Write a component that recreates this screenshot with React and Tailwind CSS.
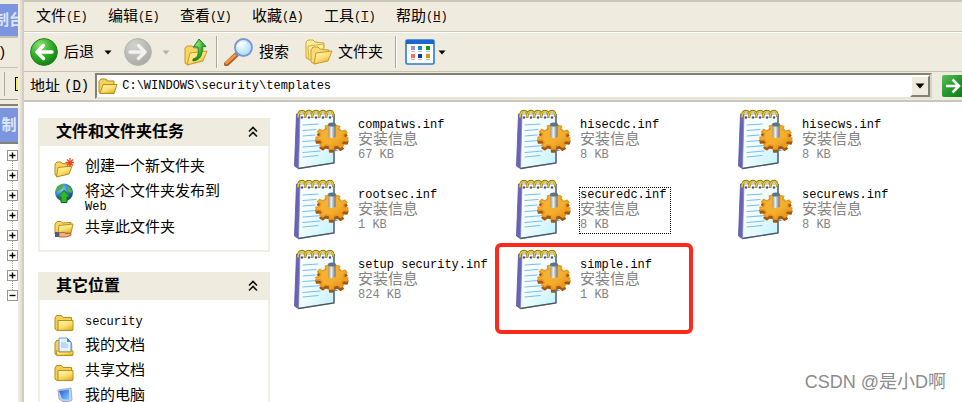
import React from "react";

const latin = "font-['Liberation_Mono','Noto_Sans_CJK_SC',monospace]";

const menus = [
  ["文件", "F"],
  ["编辑", "E"],
  ["查看", "V"],
  ["收藏", "A"],
  ["工具", "T"],
  ["帮助", "H"],
];

const files = [
  { name: "compatws.inf", size: "67 KB" },
  { name: "hisecdc.inf", size: "8 KB" },
  { name: "hisecws.inf", size: "8 KB" },
  { name: "rootsec.inf", size: "1 KB" },
  { name: "securedc.inf", size: "8 KB", focused: true },
  { name: "securews.inf", size: "8 KB" },
  { name: "setup security.inf", size: "824 KB" },
  { name: "simple.inf", size: "1 KB", marked: true },
];

// Outline of a nine-toothed cog seen at an angle, centred on 0,0.
const cogPath = (() => {
  const teeth = 9;
  const points = [];
  for (let i = 0; i < teeth; i++) {
    const middle = ((i + 0.3) / teeth) * Math.PI * 2;
    [
      [-0.24, 0.76],
      [-0.17, 1],
      [0.17, 1],
      [0.24, 0.76],
    ].forEach(([turn, reach]) => {
      const a = middle + (turn / teeth) * Math.PI * 2;
      points.push(`${(Math.cos(a) * 16 * reach).toFixed(1)} ${(Math.sin(a) * 12 * reach).toFixed(1)}`);
    });
  }
  return `M${points.join("L")}z`;
})();

function Gradients() {
  return (
    <svg width="0" height="0" className="absolute" aria-hidden="true">
      <defs>
        <radialGradient id="green" cx="35%" cy="25%" r="80%">
          <stop offset="0" stopColor="#8fe07a" />
          <stop offset="0.5" stopColor="#38b22b" />
          <stop offset="1" stopColor="#0b7d10" />
        </radialGradient>
        <radialGradient id="grey" cx="35%" cy="25%" r="80%">
          <stop offset="0" stopColor="#d2d2ce" />
          <stop offset="1" stopColor="#a9a9a5" />
        </radialGradient>
        <linearGradient id="go" x1="0" y1="0" x2="1" y2="1">
          <stop offset="0" stopColor="#5cbf5c" />
          <stop offset="0.5" stopColor="#239a2b" />
          <stop offset="1" stopColor="#0c7a16" />
        </linearGradient>
        <linearGradient id="folder" x1="0" y1="0" x2="0.6" y2="1">
          <stop offset="0" stopColor="#fff6b4" />
          <stop offset="0.6" stopColor="#fbdf72" />
          <stop offset="1" stopColor="#e6b32f" />
        </linearGradient>
        <linearGradient id="page" x1="0" y1="0" x2="1" y2="1">
          <stop offset="0" stopColor="#ffffff" />
          <stop offset="0.5" stopColor="#eefcff" />
          <stop offset="1" stopColor="#bdf2fb" />
        </linearGradient>
        <linearGradient id="gear" x1="0" y1="0" x2="1" y2="1">
          <stop offset="0" stopColor="#f9b537" />
          <stop offset="0.6" stopColor="#f4ad2c" />
          <stop offset="1" stopColor="#e08a10" />
        </linearGradient>
        <linearGradient id="pin" x1="0" y1="0" x2="1" y2="0">
          <stop offset="0" stopColor="#8a969e" />
          <stop offset="0.4" stopColor="#eef2f4" />
          <stop offset="1" stopColor="#66727a" />
        </linearGradient>
        <radialGradient id="lens" cx="40%" cy="35%" r="70%">
          <stop offset="0" stopColor="#f4fdff" />
          <stop offset="1" stopColor="#9fdcf5" />
        </radialGradient>
        <radialGradient id="globe" cx="35%" cy="30%" r="75%">
          <stop offset="0" stopColor="#8ecbff" />
          <stop offset="0.6" stopColor="#2a78d0" />
          <stop offset="1" stopColor="#0e3f96" />
        </radialGradient>
        <linearGradient id="screen" x1="0" y1="0" x2="1" y2="1">
          <stop offset="0" stopColor="#2354d8" />
          <stop offset="1" stopColor="#7cd0ff" />
        </linearGradient>
      </defs>
    </svg>
  );
}

function CircleArrow({ back }) {
  return (
    <svg width="28" height="28" viewBox="0 0 28 28" className="shrink-0">
      <circle cx="14" cy="14" r="13.4" fill={back ? "url(#green)" : "url(#grey)"} stroke={back ? "#23852a" : "#b4b4b0"} />
      <g transform={back ? undefined : "translate(28 0) scale(-1 1)"}>
        <path d="M22 14H8M13.5 7.5 7 14l6.5 6.5" fill="none" stroke={back ? "#fff" : "#f3f2ee"} strokeWidth="3.4" strokeLinecap="round" strokeLinejoin="round" />
      </g>
    </svg>
  );
}

function Caret({ color = "#000" }) {
  return (
    <svg width="8" height="5" viewBox="0 0 8 5" className="shrink-0">
      <path d="M.5.5h7L4 4.5z" fill={color} />
    </svg>
  );
}

function UpFolderIcon() {
  return (
    <svg width="24" height="28" viewBox="0 0 24 28" className="shrink-0">
      <path d="M1 10l2-2h5l2 2 9 0v6L4 27l-3-2z" fill="#f6d566" stroke="#c79a24" />
      <path d="M6 15l17-2-4 10-16 4z" fill="url(#folder)" stroke="#c79a24" />
      <path d="M9 21c5-1 6-5 5-12h-4.500L15 1l7 7.500-4 .5c1 8-2 13-9 14z" fill="url(#green)" stroke="#1d8028" />
    </svg>
  );
}

function SearchIcon() {
  return (
    <svg width="30" height="28" viewBox="0 0 30 28" className="shrink-0">
      <path d="M12 17 2.500 26" stroke="#a8592a" strokeWidth="5" strokeLinecap="round" />
      <path d="M12 16.500 2.500 25" stroke="#f0953d" strokeWidth="3" strokeLinecap="round" />
      <path d="M14 15l-2 2" stroke="#6f7fc0" strokeWidth="4" />
      <circle cx="19.500" cy="9.500" r="8.500" fill="url(#lens)" stroke="#7d94dc" strokeWidth="1.800" />
      <path d="M14 8c1-3 4-4 7-3" fill="none" stroke="#fff" strokeWidth="2" strokeLinecap="round" />
    </svg>
  );
}

function FoldersIcon() {
  return (
    <svg width="28" height="26" viewBox="0 0 28 26" className="shrink-0">
      <path d="M1 3l2-2h5l2 2 9 1v5L5 21l-4-2z" fill="url(#folder)" stroke="#d0a537" />
      <path d="M3 7l16-2-2 11-13 5z" fill="#fff0a0" stroke="#d8b04a" />
      <path d="M6 11l2-3h5l2 2 9 1v4l-14 10-4-2z" fill="#f8db76" stroke="#c79a2e" />
      <path d="M11 14l16-2-4 10-14 3z" fill="url(#folder)" stroke="#c79a2e" />
    </svg>
  );
}

function ViewsIcon() {
  const dots = [
    [6, 7, "#9c96c8"],
    [13, 7, "#1389d8"],
    [21, 7, "#119912"],
    [6, 15, "#f4764e"],
    [13, 15, "#1239a8"],
    [21, 15, "#cf9b0f"],
  ];
  return (
    <svg width="30" height="26" viewBox="0 0 30 26" className="shrink-0">
      <rect x="1" y="1" width="28" height="24" rx="1.500" fill="#fbfdff" stroke="#2a78d4" strokeWidth="1.600" />
      <path d="M1 1h28v4H1z" fill="#1c66cf" />
      {dots.map(([x, y, c]) => (
        <g key={c}>
          <rect x={x} y={y} width="4" height="4" fill={c} />
          <path d={`M${x} ${y + 5.5}h4`} stroke="#b6bccb" />
        </g>
      ))}
    </svg>
  );
}

function OpenFolder() {
  return (
    <svg width="20" height="17" viewBox="0 0 20 17" className="shrink-0">
      <path d="M1 3.500 3 1h5l1.500 2H16v3L4 15.500H2L1 14z" fill="#f5d259" stroke="#b58a14" />
      <path d="M5 6.500h14L16 15.500H2z" fill="url(#folder)" stroke="#b88c18" />
    </svg>
  );
}

function ClosedFolder({ doc }) {
  return (
    <svg width="20" height="20" viewBox="0 0 20 20" className="shrink-0">
      <path d="M1 6l1.500-2.500h5L9 5.500h8.500L18 17l-1 1.500H3L1 17z" fill="#f3cf55" stroke="#b88e1c" />
      {doc && (
        <>
          <path d="M5 1h8l4 4v10H5z" fill="#e4f2ff" stroke="#6b9bd8" />
          <path d="M13 1v4h4z" fill="#3f8ee6" />
          <path d="M7 6h5M7 8h7M7 10h7" stroke="#8fc0ee" />
        </>
      )}
      <path d={doc ? "M2 14h3v1h12v-1h2v4l-1 .5H3z" : "M4 8.500h15V18l-1 .5H4z"} fill="url(#folder)" stroke="#b88e1c" />
    </svg>
  );
}

function NewFolder() {
  return (
    <svg width="20" height="20" viewBox="0 0 20 20" className="shrink-0">
      <path d="M1 6l2-2h4l1 1.500 8 .5v4L4 18l-3-1z" fill="#f5d666" stroke="#b88e1c" />
      <path d="M4 9.500 18 8l-3 8-12.500 3z" fill="url(#folder)" stroke="#b88e1c" />
      <path d="M16 0v9M11.500 4.500h9M13 1.500l6 6M19 1.500l-6 6" stroke="#ee4a22" strokeWidth="1.300" />
    </svg>
  );
}

function PublishIcon() {
  return (
    <svg width="20" height="20" viewBox="0 0 20 20" className="shrink-0">
      <circle cx="10" cy="9.500" r="9" fill="url(#globe)" />
      <path d="M3 4c3-3 6-3 7-2L8 6 4 8 1.500 9zM13 3c4 1 5 4 5.500 7L14 9z" fill="#4fb043" />
      <path d="M10 7.500l6.500 6.500H13v5.500H7V14H3.500z" fill="#35b52c" stroke="#0f6d18" />
    </svg>
  );
}

function ShareIcon() {
  return (
    <svg width="20" height="18" viewBox="0 0 20 18" className="shrink-0">
      <path d="M1 4l2-2.500h4L8.500 3 17 2.500V9L5 14H1z" fill="#f5d666" stroke="#b88e1c" />
      <path d="M5 5.500 19 4l-2 9H4z" fill="url(#folder)" stroke="#b88e1c" />
      <path d="M1 12h4v5H1z" fill="#4a5b8c" />
      <path d="M5 13c3-1 5-1 7 .5h5v2l-5 1.500H5z" fill="#eeb184" stroke="#9a5328" strokeWidth=".8" />
    </svg>
  );
}

function ComputerIcon() {
  return (
    <svg width="20" height="20" viewBox="0 0 20 20" className="shrink-0">
      <path d="M4 3l13-2 1 12-5 4-5-3-3-2z" fill="#c9cbe8" stroke="#a9abd0" />
      <path d="M5 4l10-1.500V13L8 12z" fill="url(#screen)" />
      <path d="M8 15l6-.5 2 4-9 1z" fill="#d8d8e4" stroke="#9a9ab0" />
    </svg>
  );
}

function InfIcon() {
  return (
    <svg width="56" height="62" viewBox="0 0 56 62" className="shrink-0">
      <path d="M2.500 5 .5 57l4.500 3L7 6z" fill="#6a64b8" stroke="#5753a4" strokeWidth=".8" />
      <path d="M6 5h34v49L4.500 59.500z" fill="url(#page)" stroke="#8089a8" strokeWidth=".8" />
      <path d="M40 5v49L4.500 59.500" fill="none" stroke="#4e5664" strokeWidth="1.300" />
      <g fill="none" stroke="#7dbcec" strokeWidth="1.200" strokeLinecap="round">
        <path d="M9 16l15-1M9 21.500l13-1M9 27l12-1M9 32.500l14-1M9 38l19-1.500M9 43.500l17-1.500M9 48l15-1.500" />
      </g>
      {[4, 11, 18, 25, 32].map((x) => (
        <g key={x} fill="none">
          <circle cx={x + 4} cy="8.500" r="1.200" fill="#4c489b" />
          <path d={`M${x} 9c0-5 2-7 4-7s4 2 3 6`} stroke="#857011" strokeWidth="2.400" />
          <path d={`M${x} 8.500c0-4.500 2-6 4-6s3.500 1.500 3 5`} stroke="#e6cb35" strokeWidth="1.400" />
        </g>
      ))}
      <path d="M33 39l6 4 6-2z" fill="#3c9cf0" />
      <g transform="translate(38 28)" strokeLinejoin="round">
        <path d={cogPath} transform="translate(0 3)" fill="#a9560a" stroke="#a9560a" strokeWidth="1.500" />
        <path d={cogPath} fill="url(#gear)" stroke="#e59c22" strokeWidth="1.500" />
        <path d="M-3.500-12V0c2 1.500 5 1.500 7 0v-12z" fill="url(#pin)" />
        <ellipse cx="0" cy="-12.500" rx="4" ry="2" fill="#5f7482" />
      </g>
    </svg>
  );
}

function Chevrons() {
  return (
    <svg width="10" height="12" viewBox="0 0 10 12">
      <path d="M1 5.500 5 1.500l4 4M1 10.500l4-4 4 4" fill="none" stroke="#111" strokeWidth="1.600" />
    </svg>
  );
}

function Panel({ title, children, className }) {
  return (
    <section className={className}>
      <h2 className="flex h-7 items-center justify-between bg-[#efebde] pr-3 pl-[18px] text-[16px] font-bold">
        {title}
        <button aria-label={`折叠 ${title}`} className="flex">
          <Chevrons />
        </button>
      </h2>
      <ul className="border-2 border-t-0 border-[#f1eee4] px-[14px] pt-3">{children}</ul>
    </section>
  );
}

function PanelLink({ icon, children, tall }) {
  return (
    <li className={tall ? "h-9" : "h-[25px]"}>
      <a href="#" className="flex items-start gap-[11px] leading-4">
        <span className="flex h-5 items-center">{icon}</span>
        <span>{children}</span>
      </a>
    </li>
  );
}

function BackgroundWindow() {
  return (
    <aside className="flex w-[18px] shrink-0 flex-col overflow-hidden bg-[#efebde] whitespace-nowrap">
      <div className="mt-1 flex h-8 items-center justify-center bg-[#7b96de] text-[15px] font-bold text-[#dfe6ff]">制台</div>
      <div className="flex h-8 items-center border-t-2 border-b border-t-[#c6c3b5] border-b-[#c6c3b5] text-[15px]">)</div>
      <div className="flex h-8 items-center justify-end border-b border-[#aca899]">
        <i className="mr-2.5 h-6 w-px bg-[#aca899]" />
        <i className="h-3.5 w-[3px] border border-r-0 border-black bg-[#f4ee66]" />
      </div>
      <div className="mt-1 h-1 border-t-2 border-[#848073]" />
      <div className="flex h-9 items-center justify-center border-b-2 border-[#848073] bg-[#7b96de] text-[15px] font-bold text-[#dfe6ff]">制</div>
      <div className="flex-1 bg-white pt-1.5">
        <div className="flex flex-col items-end">
          {["+", "+", "+", "+", "+", "+", "+", "-"].map((sign, i) => (
            <div key={i} className="flex h-5 w-[11px] flex-col items-center">
              <svg width="11" height="11" viewBox="0 0 11 11">
                <rect x=".5" y=".5" width="10" height="10" fill="#fff" stroke="#9a9787" />
                <path d={sign === "+" ? "M2.500 5.500h6M5.500 2.500v6" : "M2.500 5.500h6"} stroke="#000" strokeWidth="1.400" />
              </svg>
              {sign === "+" && <i className="h-[9px] border-l border-dotted border-[#9a9787]" />}
            </div>
          ))}
        </div>
      </div>
    </aside>
  );
}

export default function App() {
  return (
    <div className="relative flex h-screen overflow-hidden bg-white font-['Liberation_Sans','Noto_Sans_CJK_SC',sans-serif] text-[15px] text-black">
      <Gradients />
      <BackgroundWindow />
      <div className="w-1.5 shrink-0 border-x-2 border-[#efebde] border-r-[#d2cec2] bg-[#e3dfd3]" />

      <main className="flex min-w-0 flex-1 flex-col">
        <header className="bg-[#efebde]">
          <nav className="flex h-8 items-center gap-5 border-t-2 border-b border-[#cbc7b8] pl-3">
            {menus.map(([label, key]) => (
              <button key={key} className="flex w-[52px] items-center whitespace-nowrap">
                {label}
                <span className={`text-[12px] ${latin}`}>
                  (<u>{key}</u>)
                </span>
              </button>
            ))}
          </nav>

          <div className="flex h-10 items-center border-t border-b border-t-white border-b-[#c4c0b2] pl-1.5 whitespace-nowrap">
            <button className="flex items-center gap-1.5">
              <CircleArrow back />
              后退
            </button>
            <button aria-label="后退历史" className="ml-2.5 flex">
              <Caret />
            </button>
            <button aria-label="前进" className="ml-3 flex">
              <CircleArrow />
            </button>
            <button aria-label="前进历史" className="ml-2.5 flex">
              <Caret color="#b5b2a6" />
            </button>
            <button aria-label="向上" className="ml-3.5 flex">
              <UpFolderIcon />
            </button>
            <i className="ml-2 h-8 w-0.5 border-r border-l border-r-white border-l-[#aca899]" />
            <button className="ml-1.5 flex items-center gap-[5px]">
              <SearchIcon />
              搜索
            </button>
            <button className="ml-4 flex items-center gap-[5px]">
              <FoldersIcon />
              文件夹
            </button>
            <i className="ml-3 h-8 w-0.5 border-r border-l border-r-white border-l-[#aca899]" />
            <button aria-label="查看方式" className="ml-2 flex items-center gap-[3px]">
              <ViewsIcon />
              <Caret />
            </button>
          </div>

          <div className="flex h-[30px] items-center border-b-2 border-[#cbc7b8] pl-1.5">
            <label htmlFor="address" className="flex shrink-0 items-center whitespace-nowrap">
              地址
              <span className={`ml-1 text-[14px] ${latin}`}>
                (<u>D</u>)
              </span>
            </label>
            <div className="ml-1.5 flex h-[26px] min-w-0 flex-1 items-center border-2 border-t-[#848073] border-r-[#d6d2c4] border-b-[#e8e4d8] border-l-[#848073] bg-white pl-px">
              <OpenFolder />
              <input
                id="address"
                defaultValue="C:\WINDOWS\security\templates"
                className={`ml-1 h-5 min-w-0 flex-1 bg-transparent text-[12px] outline-none ${latin}`}
              />
              <button
                aria-label="展开地址列表"
                className="flex h-[22px] w-5 items-center justify-center border-2 border-t-white border-r-[#848073] border-b-[#848073] border-l-white bg-[#efebde]"
              >
                <svg width="10" height="6" viewBox="0 0 10 6">
                  <path d="M.5.5h9L5 5.500z" />
                </svg>
              </button>
            </div>
            <button aria-label="转到" className="ml-2.5 flex h-[22px] w-5 shrink-0 overflow-hidden">
              <svg width="22" height="22" viewBox="0 0 22 22" className="shrink-0">
                <rect width="22" height="22" rx="2" fill="url(#go)" />
                <path d="M4 11h13M10.500 4.500 17 11l-6.500 6.500" fill="none" stroke="#fff" strokeWidth="2.600" />
              </svg>
            </button>
          </div>
        </header>

        <div className="flex min-h-0 flex-1">
          <div className="flex w-[246px] shrink-0 flex-col gap-5 pt-4 pl-3.5">
            <Panel title="文件和文件夹任务" className="h-[134px] [&>ul]:h-[106px]">
              <PanelLink icon={<NewFolder />}>创建一个新文件夹</PanelLink>
              <PanelLink icon={<PublishIcon />} tall>
                将这个文件夹发布到
                <span className={`block text-[12px] ${latin}`}>Web</span>
              </PanelLink>
              <PanelLink icon={<ShareIcon />}>共享此文件夹</PanelLink>
            </Panel>
            <Panel title="其它位置">
              <PanelLink icon={<ClosedFolder />}>
                <span className={`text-[12px] ${latin}`}>security</span>
              </PanelLink>
              <PanelLink icon={<ClosedFolder doc />}>我的文档</PanelLink>
              <PanelLink icon={<ClosedFolder />}>共享文档</PanelLink>
              <PanelLink icon={<ComputerIcon />}>我的电脑</PanelLink>
            </Panel>
          </div>

          <ul className="ml-6 grid flex-1 auto-rows-[70px] grid-cols-[repeat(auto-fill,222px)] pt-[7px]">
            {files.map((file) => (
              <li key={file.name} className="relative flex items-start gap-[7px]">
                <InfIcon />
                <div
                  className={`mt-2 border border-dotted pr-1 whitespace-nowrap ${latin} text-[12px] leading-[15px] ${
                    file.focused ? "border-black" : "border-transparent"
                  }`}
                >
                  <p>{file.name}</p>
                  <p className="text-[15px] text-[#848484]">安装信息</p>
                  <p className="text-[#848484]">{file.size}</p>
                </div>
                {file.marked && (
                  <span className="absolute -top-1.5 -left-[21px] h-[91px] w-[198px] rounded-md border-4 border-[#fb2a1c]" />
                )}
              </li>
            ))}
          </ul>
        </div>
      </main>

      <p className="absolute right-4 bottom-1.5 text-[18px] text-[#8c8c8c]">CSDN @是小D啊</p>
    </div>
  );
}
